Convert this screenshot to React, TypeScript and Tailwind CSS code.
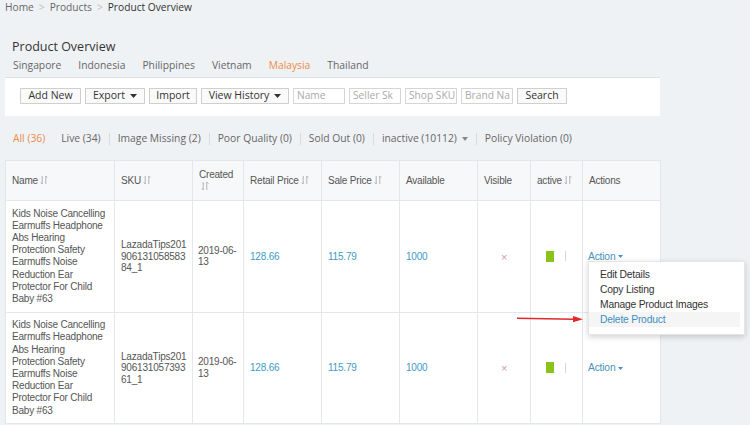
import React from "react";

const SortIcon = () => (
  <svg width="8" height="10" viewBox="0 0 8 10" className="inline-block ml-[2px] align-[-1px]">
    <path d="M2.2 1v8M0.7 7.5L2.2 9" stroke="#aaa" strokeWidth="0.9" fill="none" />
    <path d="M5.8 9V1M7.3 2.5L5.8 1" stroke="#aaa" strokeWidth="0.9" fill="none" />
  </svg>
);

const Caret = () => (
  <svg width="7" height="4" viewBox="0 0 7 4" className="inline-block ml-[5px] align-middle">
    <path d="M0 0h7L3.5 4z" fill="#333" />
  </svg>
);

const countries = ["Singapore", "Indonesia", "Philippines", "Vietnam", "Malaysia", "Thailand"];

const filters = [
  { label: "All (36)", active: true, sep: false },
  { label: "Live (34)", sep: false },
  { label: "Image Missing (2)", sep: true },
  { label: "Poor Quality (0)", sep: true },
  { label: "Sold Out (0)", sep: true },
  { label: "inactive (10112)", sep: true, caret: true },
  { label: "Policy Violation (0)", sep: true },
];

const headers: { label: string; sort?: boolean; w: string }[] = [
  { label: "Name", sort: true, w: "w-[109px]" },
  { label: "SKU", sort: true, w: "w-[78px]" },
  { label: "Created", sort: true, w: "w-[51px]" },
  { label: "Retail Price", sort: true, w: "w-[78px]" },
  { label: "Sale Price", sort: true, w: "w-[78px]" },
  { label: "Available", w: "w-[78px]" },
  { label: "Visible", w: "w-[53px]" },
  { label: "active", sort: true, w: "w-[52px]" },
  { label: "Actions", w: "w-[78px]" },
];

const rows = [
  { sku: ["LazadaTips201", "906131058583", "84_1"], menu: true },
  { sku: ["LazadaTips201", "906131057393", "61_1"], menu: false },
];

const productName =
  "Kids Noise Cancelling Earmuffs Headphone Abs Hearing Protection Safety Earmuffs Noise Reduction Ear Protector For Child Baby #63";

const menuItems = ["Edit Details", "Copy Listing", "Manage Product Images", "Delete Product"];

export default function App() {
  const ui = { fontFamily: '"Open Sans", "Noto Sans", sans-serif' };
  const arial = { fontFamily: '"Liberation Sans", Arial, sans-serif' };
  return (
    <div className="relative w-[750px] h-[425px] overflow-hidden bg-[#eff2f5] text-[#555]" style={ui}>
      {/* Breadcrumb */}
      <div className="pl-[5px] h-[15px] text-[10.2px] leading-[15px] flex gap-[5px]">
        <span className="text-[#666]">Home</span>
        <span className="text-[#bbb]">&gt;</span>
        <span className="text-[#666]">Products</span>
        <span className="text-[#bbb]">&gt;</span>
        <span className="text-[#333]">Product Overview</span>
      </div>

      <div className="pl-[12px] mt-[23px] text-[12.5px] leading-[18px] text-[#333]">Product Overview</div>
      <div className="pl-[13px] mt-[2px] flex gap-[17px] text-[10.3px] leading-[14px]">
        {countries.map((c) => (
          <span key={c} className={c === "Malaysia" ? "text-[#f08a45]" : "text-[#666]"}>
            {c}
          </span>
        ))}
      </div>

      {/* Toolbar */}
      <div className="ml-[5px] w-[655px] mt-[5px] border-t border-[#dcdfe4] bg-white h-[39px] pt-[10px] pl-[15px] flex gap-[4px] text-[10.5px]">
        {["Add New", "Export", "Import", "View History"].map((b) => (
          <div
            key={b}
            className={`h-[16px] border border-[#cfcfcf] bg-[#fafafa] flex items-center justify-center text-[#333] ${
              b === "Add New" ? "w-[61px]" : b === "Export" ? "w-[60px]" : b === "Import" ? "w-[48px]" : "w-[88px]"
            }`}
          >
            {b}
            {(b === "Export" || b === "View History") && <Caret />}
          </div>
        ))}
        {["Name", "Seller Sk", "Shop SKU", "Brand Na"].map((p) => (
          <div
            key={p}
            className="h-[16px] w-[52px] border border-[#d5d5d5] bg-white flex items-center pl-[3px] text-[#aaa] overflow-hidden whitespace-nowrap text-[10.2px]"
          >
            {p}
          </div>
        ))}
        <div className="h-[16px] w-[50px] border border-[#cfcfcf] bg-[#fafafa] flex items-center justify-center text-[#333]">
          Search
        </div>
      </div>

      {/* Filters */}
      <div className="pl-[13px] mt-[15px] h-[16px] flex items-center text-[10.3px]">
        {filters.map((f, i) => (
          <div key={f.label} className="flex items-center">
            {f.sep && <span className="w-px h-[12px] bg-[#d8dbe0] mx-[8px]" />}
            {!f.sep && i > 0 && <span className="w-[16px]" />}
            <span className={f.active ? "text-[#f08a45]" : "text-[#666]"}>{f.label}</span>
            {f.caret && (
              <svg width="6" height="4" viewBox="0 0 6 4" className="ml-[5px]">
                <path d="M0 0h6L3 4z" fill="#888" />
              </svg>
            )}
          </div>
        ))}
      </div>

      {/* Table */}
      <table
        className="ml-[5px] mt-[13px] w-[655px] table-fixed border-collapse text-[10px] tracking-[-0.2px]"
        style={arial}
      >
        <thead>
          <tr className="h-[40px] bg-[#f7f8fa]">
            {headers.map((h) => (
              <th
                key={h.label}
                className={`${h.w} border border-[#e3e6ea] text-left font-normal text-[#555] px-[6px] leading-[12px] align-middle`}
              >
                {h.label === "Created" ? (
                  <>
                    Created
                    <br />
                    <SortIcon />
                  </>
                ) : (
                  <>
                    {h.label}
                    {h.sort && <SortIcon />}
                  </>
                )}
              </th>
            ))}
          </tr>
        </thead>
        <tbody className="bg-white">
          {rows.map((r, idx) => (
            <tr key={idx}>
              <td className="border border-[#e3e6ea] px-[6px] py-[6.5px] leading-[12.2px] text-[#555] align-middle">
                {productName}
              </td>
              <td className="border border-[#e3e6ea] pl-[6px] pr-[2px] leading-[11.5px] text-[#555] align-middle">
                {r.sku.map((s) => (
                  <div key={s}>{s}</div>
                ))}
              </td>
              <td className="border border-[#e3e6ea] pl-[5px] pr-[1px] leading-[11.5px] text-[#555] align-middle">
                <div className="whitespace-nowrap">2019-06-</div>
                <div>13</div>
              </td>
              <td className="border border-[#e3e6ea] px-[6px] text-[#3f9ac6] align-middle">128.66</td>
              <td className="border border-[#e3e6ea] px-[6px] text-[#3f9ac6] align-middle">115.79</td>
              <td className="border border-[#e3e6ea] px-[6px] text-[#3f9ac6] align-middle">1000</td>
              <td className="border border-[#e3e6ea] text-center text-[#cfa0a0] text-[11px] align-middle pt-[1px]">×</td>
              <td className="border border-[#e3e6ea] align-middle">
                <div className="flex items-center pl-[15px]">
                  <span className="w-[8px] h-[11px] bg-[#8cc21c]" />
                  <span className="ml-[11px] w-px h-[10px] bg-[#d6d6d6]" />
                </div>
              </td>
              <td className="border border-[#e3e6ea] px-[5px] align-middle">
                <div className="relative">
                  <span className="text-[#4a92bd] text-[10.3px]">
                    Action
                    <svg width="5" height="3" viewBox="0 0 5 3" className="inline-block ml-[3px] align-middle">
                      <path d="M0 0h5L2.5 3z" fill="#4a92bd" />
                    </svg>
                  </span>
                  {r.menu && (
                    <div className="absolute z-10 left-0 top-[12px] w-[157px] h-[74px] bg-white border border-[#e6e6e6] shadow-[0_2px_6px_rgba(0,0,0,0.18)] pt-[5.5px] text-[10.3px]">
                      {menuItems.map((m) => (
                        <div
                          key={m}
                          className={`h-[15px] leading-[15px] pl-[11px] mr-[4px] ${
                            m === "Delete Product" ? "bg-[#f5f5f5] text-[#3f8fc2]" : "text-[#333]"
                          }`}
                        >
                          {m}
                        </div>
                      ))}
                    </div>
                  )}
                </div>
              </td>
            </tr>
          ))}
        </tbody>
      </table>

      {/* Annotation arrow */}
      <svg className="absolute left-[516px] top-[314px]" width="68" height="10" viewBox="0 0 68 10">
        <path d="M1 4.2 L58 5.3" stroke="#e02a2a" strokeWidth="1.4" />
        <path d="M57 2 L67 5.3 L57 8.2z" fill="#e02a2a" />
      </svg>
    </div>
  );
}
